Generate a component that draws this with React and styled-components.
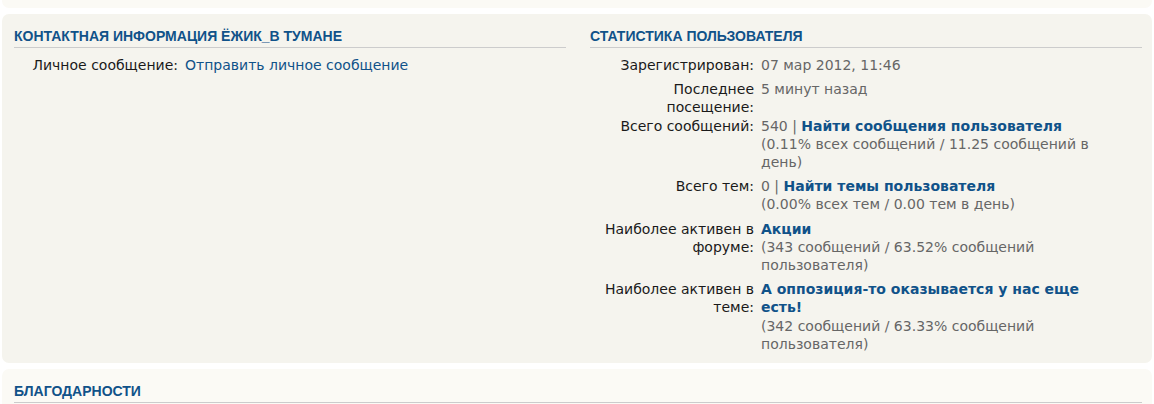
import React from "react";
import styled, { createGlobalStyle } from "styled-components";

const Global = createGlobalStyle`
  html, body { margin: 0; padding: 0; background: #ffffff; }
  body { font-family: "DejaVu Sans", Verdana, sans-serif; font-size: 14px; }
`;

const Page = styled.div`
  padding: 0 2px;
`;

const Panel = styled.section`
  background: ${(p) => (p.$light ? "#fbfaf5" : "#f5f4ee")};
  border-radius: ${(p) => (p.$tail ? "0 0 7px 7px" : p.$open ? "7px 7px 0 0" : "7px")};
  margin-bottom: ${(p) => (p.$open ? "0" : "6px")};
  padding: ${(p) => (p.$tail ? "0" : p.$open ? "14px 10px 1px 12px" : "14px 10px 4px 12px")};
  height: ${(p) => (p.$tail ? "8px" : "auto")};
`;

const Columns = styled.div`
  display: flex;
  gap: 24px;
`;

const Column = styled.div`
  flex: 0 0 552px;
  width: 552px;
`;

const Heading = styled.h3`
  margin: 0;
  padding: 0 0 3px;
  font-family: "Liberation Sans", Arial, sans-serif;
  font-size: 14px;
  line-height: 16px;
  font-weight: bold;
  text-transform: uppercase;
  color: #105289;
  border-bottom: 1px solid #cccccc;
`;

const Details = styled.dl`
  margin: 8px 0 0;
  padding: 0;
  line-height: 18.2px;
`;

const Row = styled.div`
  display: flex;
  align-items: flex-start;
`;

const Term = styled.dt`
  flex: 0 0 164px;
  width: 164px;
  text-align: right;
  color: #1a1a1a;
`;

const Desc = styled.dd`
  flex: 1;
  margin: 0 0 6px;
  padding-left: 7px;
  color: #666666;
`;

const Link = styled.a`
  color: #105289;
  font-weight: ${(p) => (p.$bold ? "bold" : "normal")};
  text-decoration: none;
`;

const Sep = styled.span`
  color: #666666;
`;

export default function App() {
  return (
    <>
      <Global />
      <Page>
        <Panel $light $tail />
        <Panel>
          <Columns>
            <Column>
              <Heading>Контактная информация Ёжик_в тумане</Heading>
              <Details>
                <Row>
                  <Term>Личное сообщение:</Term>
                  <Desc>
                    <Link href="#">Отправить личное сообщение</Link>
                  </Desc>
                </Row>
              </Details>
            </Column>
            <Column>
              <Heading>Статистика пользователя</Heading>
              <Details>
                <Row>
                  <Term>Зарегистрирован:</Term>
                  <Desc>07 мар 2012, 11:46</Desc>
                </Row>
                <Row>
                  <Term>Последнее<br />посещение:</Term>
                  <Desc>5 минут назад</Desc>
                </Row>
                <Row>
                  <Term>Всего сообщений:</Term>
                  <Desc>
                    540 <Sep>|</Sep> <Link href="#" $bold>Найти сообщения пользователя</Link>
                    <br />
                    (0.11% всех сообщений / 11.25 сообщений в
                    <br />
                    день)
                  </Desc>
                </Row>
                <Row>
                  <Term>Всего тем:</Term>
                  <Desc>
                    0 <Sep>|</Sep> <Link href="#" $bold>Найти темы пользователя</Link>
                    <br />
                    (0.00% всех тем / 0.00 тем в день)
                  </Desc>
                </Row>
                <Row>
                  <Term>Наиболее активен в<br />форуме:</Term>
                  <Desc>
                    <Link href="#" $bold>Акции</Link>
                    <br />
                    (343 сообщений / 63.52% сообщений
                    <br />
                    пользователя)
                  </Desc>
                </Row>
                <Row>
                  <Term>Наиболее активен в<br />теме:</Term>
                  <Desc>
                    <Link href="#" $bold>А оппозиция-то оказывается у нас еще<br />есть!</Link>
                    <br />
                    (342 сообщений / 63.33% сообщений
                    <br />
                    пользователя)
                  </Desc>
                </Row>
              </Details>
            </Column>
          </Columns>
        </Panel>
        <Panel $light $open>
          <Heading>Благодарности</Heading>
        </Panel>
      </Page>
    </>
  );
}
